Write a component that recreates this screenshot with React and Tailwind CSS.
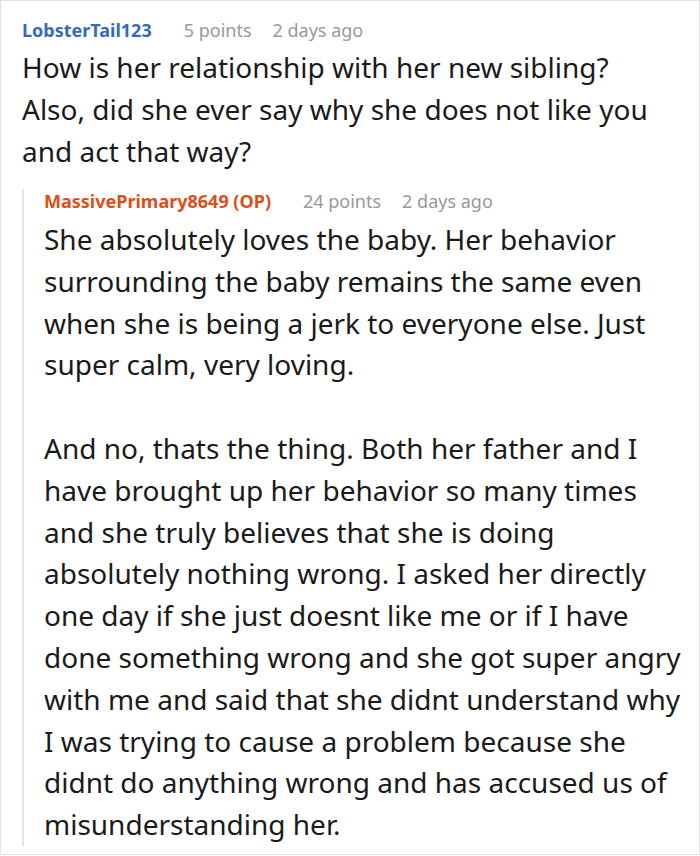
function Meta({ name, nameClass, points, time, className = '' }) {
  return (
    <div className={`flex items-baseline text-[18px] leading-[24px] ${className}`}>
      <span className={`font-bold ${nameClass}`}>{name}</span>
      <span className="ml-[32px] text-[#999999]">{points}</span>
      <span className="ml-[21px] text-[#999999]">{time}</span>
    </div>
  )
}

function App() {
  return (
    <div className="h-[856px] w-[700px] bg-white font-['Noto_Sans',sans-serif] text-[#1a1a1a]">
      <div className="h-[855px] border border-[#e2e2e2] pl-[21px] pr-[16px] pt-[17px]">
        <Meta name="LobsterTail123" nameClass="text-[#336bb8]" points="5 points" time="2 days ago" />
        <p className="mt-[4px] w-[626px] text-[28px] leading-[42px]">
          How is her relationship with her new sibling? Also, did she ever say why she does not like you and act that way?
        </p>

        <div className="mt-[27px] border-l-2 border-[#e6e6e6] pl-[20px]">
          <Meta
            name="MassivePrimary8649 (OP)"
            nameClass="text-[#dc4f16]"
            points="24 points"
            time="2 days ago"
            className="mt-[-10px]"
          />
          <div className="mt-[6px] mb-[-10px] text-[28px] leading-[41.8px]">
            <p>
              She absolutely loves the baby. Her behavior surrounding the baby remains the same even when she is being a jerk to everyone else. Just super calm, very loving.
            </p>
            <p className="mt-[41.8px]">
              And no, thats the thing. Both her father and I have brought up her behavior so many times and she truly believes that she is doing absolutely nothing wrong. I asked her directly one day if she just doesnt like me or if I have done something wrong and she got super angry with me and said that she didnt understand why I was trying to cause a problem because she didnt do anything wrong and has accused us of misunderstanding her.
            </p>
          </div>
        </div>
      </div>
    </div>
  )
}

export default App
